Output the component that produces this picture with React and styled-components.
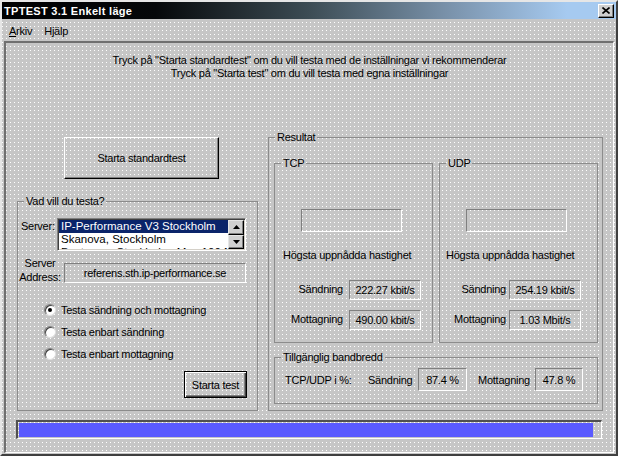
import React from "react";
import styled, { createGlobalStyle } from "styled-components";

const GlobalStyle = createGlobalStyle`
  html, body {
    margin: 0;
    padding: 0;
    background: #c6c6c6;
  }
  body {
    font-family: "Liberation Sans", Arial, sans-serif;
    font-size: 11px;
    color: #000;
  }
  * {
    box-sizing: border-box;
  }
`;

const dots = `
  background-color: #c6c6c6;
  background-image: conic-gradient(at 1px 1px, transparent 75%, #ffffff 0);
  background-size: 4px 4px;
`;

const App = () => {
  return (
    <>
      <GlobalStyle />
      <Window>
        <TitleBar>
          <TitleText>TPTEST 3.1 Enkelt läge</TitleText>
          <CloseButton>
            <svg width="8" height="7" viewBox="0 0 8 7">
              <path d="M0.5 0.5 L7.5 6.5 M7.5 0.5 L0.5 6.5" stroke="#000" strokeWidth="1.6" />
            </svg>
          </CloseButton>
        </TitleBar>
        <MenuBar>
          <MenuItem><u>A</u>rkiv</MenuItem>
          <MenuItem>H<u>j</u>älp</MenuItem>
        </MenuBar>
        <Body>
          <Intro>
            <div>Tryck på "Starta standardtest" om du vill testa med de inställningar vi rekommenderar</div>
            <div>Tryck på "Starta test" om du vill testa med egna inställningar</div>
          </Intro>
          <Main>
            <LeftColumn>
              <BigButton>Starta standardtest</BigButton>
              <Group $width={241} $height={216} $top={16}>
                <Legend>Vad vill du testa?</Legend>
                <GroupBody>
                  <ServerRow>
                    <ServerLabel>Server:</ServerLabel>
                    <ListBox>
                      <Items>
                        <Item $selected>IP-Performance V3 Stockholm</Item>
                        <Item>Skanova, Stockholm</Item>
                        <Item>Bostream, Stockholm, Max 100 Mbit</Item>
                      </Items>
                      <ScrollBar>
                        <ScrollButton>
                          <svg width="7" height="4" viewBox="0 0 7 4">
                            <polygon points="0,4 3.5,0 7,4" fill="#000" />
                          </svg>
                        </ScrollButton>
                        <ScrollButton>
                          <svg width="7" height="4" viewBox="0 0 7 4">
                            <polygon points="0,0 7,0 3.5,4" fill="#000" />
                          </svg>
                        </ScrollButton>
                      </ScrollBar>
                    </ListBox>
                  </ServerRow>
                  <AddressRow>
                    <AddressLabel>Server<br />Address:</AddressLabel>
                    <AddressBox>referens.sth.ip-performance.se</AddressBox>
                  </AddressRow>
                  <RadioList>
                    <RadioRow>
                      <RadioCircle $checked />
                      Testa sändning och mottagning
                    </RadioRow>
                    <RadioRow>
                      <RadioCircle />
                      Testa enbart sändning
                    </RadioRow>
                    <RadioRow>
                      <RadioCircle />
                      Testa enbart mottagning
                    </RadioRow>
                  </RadioList>
                  <DefaultButton>Starta test</DefaultButton>
                </GroupBody>
              </Group>
            </LeftColumn>

            <Group $width={335} $height={280} $top={0}>
              <Legend>Resultat</Legend>
              <ResultBody>
                <ProtocolRow>
                  <Group $width={159} $height={186} $top={0}>
                    <Legend>TCP</Legend>
                    <GroupBody>
                      <EmptyBox />
                      <Caption $indent={8}>Högsta uppnådda hastighet</Caption>
                      <ValueRow $labelWidth={68} $gap={6} $top={18}>
                        <RowLabel>Sändning</RowLabel>
                        <ValueBox $width={72} $height={20}>222.27 kbit/s</ValueBox>
                      </ValueRow>
                      <ValueRow $labelWidth={68} $gap={6} $top={10}>
                        <RowLabel>Mottagning</RowLabel>
                        <ValueBox $width={72} $height={20}>490.00 kbit/s</ValueBox>
                      </ValueRow>
                    </GroupBody>
                  </Group>
                  <Group $width={159} $height={186} $top={0}>
                    <Legend>UDP</Legend>
                    <GroupBody>
                      <EmptyBox />
                      <Caption $indent={6}>Högsta uppnådda hastighet</Caption>
                      <ValueRow $labelWidth={66} $gap={3} $top={18}>
                        <RowLabel>Sändning</RowLabel>
                        <ValueBox $width={72} $height={20}>254.19 kbit/s</ValueBox>
                      </ValueRow>
                      <ValueRow $labelWidth={66} $gap={3} $top={10}>
                        <RowLabel>Mottagning</RowLabel>
                        <ValueBox $width={72} $height={20}>1.03 Mbit/s</ValueBox>
                      </ValueRow>
                    </GroupBody>
                  </Group>
                </ProtocolRow>
                <Group $width={324} $height={53} $top={8}>
                  <Legend>Tillgänglig bandbredd</Legend>
                  <BandwidthRow>
                    <InlineLabel $width={83}>TCP/UDP i %:</InlineLabel>
                    <InlineLabel $width={50}>Sändning</InlineLabel>
                    <ValueBox $width={49} $height={23}>87.4 %</ValueBox>
                    <InlineLabel $width={57} $left={11}>Mottagning</InlineLabel>
                    <ValueBox $width={48} $height={23}>47.8 %</ValueBox>
                  </BandwidthRow>
                </Group>
              </ResultBody>
            </Group>
          </Main>
          <Progress>
            <ProgressFill style={{ width: "98.8%" }} />
          </Progress>
        </Body>
      </Window>
    </>
  );
};

export default App;

const Window = styled.div`
  width: 618px;
  height: 456px;
  ${dots}
  border: 2px solid;
  border-color: #e6e6e6 #404040 #404040 #e6e6e6;
  display: flex;
  flex-direction: column;
  letter-spacing: -0.25px;
`;

const TitleBar = styled.div`
  height: 17px;
  display: flex;
  align-items: center;
  justify-content: space-between;
  padding: 0 2px;
  background: linear-gradient(
    90deg,
    #000000 0%,
    #06080a 25%,
    #3c4c54 50%,
    #7890a8 72%,
    #a6caf0 92%,
    #a6caf0 100%
  );
`;

const TitleText = styled.span`
  color: #fff;
  font-weight: bold;
  font-size: 11px;
  letter-spacing: 0.3px;
`;

const CloseButton = styled.div`
  width: 16px;
  height: 14px;
  background: #d0d0d0;
  border: 1px solid;
  border-color: #fff #000 #000 #fff;
  box-shadow: inset -1px -1px #808080;
  display: flex;
  align-items: center;
  justify-content: center;
`;

const MenuBar = styled.div`
  height: 22px;
  display: flex;
  align-items: center;
  gap: 12px;
  padding: 2px 0 0 7px;
`;

const MenuItem = styled.span`
  font-size: 11px;
`;

const Body = styled.div`
  flex: 1;
  margin: 0 2px 1px 2px;
  border-style: solid;
  border-width: 2px 1px 1px 2px;
  border-color: #707070 #fff #fff #707070;
  display: flex;
  flex-direction: column;
  padding-top: 11px;
`;

const Intro = styled.div`
  text-align: center;
  line-height: 13px;
`;

const Main = styled.div`
  display: flex;
  gap: 10px;
  margin-top: 51px;
  padding-left: 11px;
`;

const LeftColumn = styled.div`
  display: flex;
  flex-direction: column;
  width: 241px;
`;

const BigButton = styled.div`
  width: 155px;
  height: 42px;
  margin: 6px 0 0 47px;
  border: 1px solid;
  border-color: #fff #000 #000 #fff;
  box-shadow: inset -1px -1px #808080;
  display: flex;
  align-items: center;
  justify-content: center;
`;

const Group = styled.fieldset`
  width: ${({ $width }) => $width}px;
  height: ${({ $height }) => $height}px;
  margin: ${({ $top }) => $top}px 0 0 0;
  padding: 0;
  min-inline-size: 0;
  border: 1px solid #8c8c8c;
  display: flex;
  flex-direction: column;
`;

const Legend = styled.legend`
  margin-left: 6px;
  padding: 0 2px;
  line-height: 13px;
`;

const GroupBody = styled.div`
  display: flex;
  flex-direction: column;
`;

const ServerRow = styled.div`
  display: flex;
  align-items: flex-start;
  margin-top: 10px;
  padding-left: 3px;
`;

const ServerLabel = styled.span`
  width: 36px;
  line-height: 13px;
  margin-top: 2px;
`;

const ListBox = styled.div`
  width: 189px;
  height: 33px;
  display: flex;
  background: #fff;
  border: 1px solid;
  border-color: #808080 #fff #fff #808080;
  box-shadow: inset 1px 1px #404040, inset -1px -1px #d4d0c8;
  padding: 1px;
  overflow: hidden;
`;

const Items = styled.div`
  flex: 1;
  overflow: hidden;
  letter-spacing: 0;
`;

const Item = styled.div`
  height: 13px;
  line-height: 13px;
  padding-left: 2px;
  white-space: nowrap;
  overflow: hidden;
  font-size: 11.5px;
  background: ${({ $selected }) => ($selected ? "#0a246a" : "transparent")};
  color: ${({ $selected }) => ($selected ? "#fff" : "#000")};
`;

const ScrollBar = styled.div`
  width: 16px;
  display: flex;
  flex-direction: column;
`;

const ScrollButton = styled.div`
  flex: 1;
  background: #d0d0d0;
  border: 1px solid;
  border-color: #e6e6e6 #000 #000 #e6e6e6;
  box-shadow: inset -1px -1px #808080;
  display: flex;
  align-items: center;
  justify-content: center;
`;

const AddressRow = styled.div`
  display: flex;
  align-items: flex-start;
  margin-top: 5px;
  padding-left: 1px;
`;

const AddressLabel = styled.div`
  width: 42px;
  text-align: center;
  line-height: 14px;
`;

const AddressBox = styled.div`
  width: 182px;
  height: 20px;
  margin: 7px 0 0 3px;
  border: 1px solid;
  border-color: #808080 #fff #fff #808080;
  display: flex;
  align-items: center;
  justify-content: center;
`;

const RadioList = styled.div`
  display: flex;
  flex-direction: column;
  margin-top: 15px;
  padding-left: 26px;
`;

const RadioRow = styled.div`
  height: 22px;
  display: flex;
  align-items: center;
  gap: 5px;
`;

const RadioCircle = styled.span`
  width: 12px;
  height: 12px;
  border-radius: 50%;
  background: #fff;
  border: 1px solid;
  border-color: #808080 #e0e0e0 #e0e0e0 #808080;
  box-shadow: inset 1px 1px #404040;
  display: flex;
  align-items: center;
  justify-content: center;

  &::after {
    content: "";
    width: 4px;
    height: 4px;
    border-radius: 50%;
    background: ${({ $checked }) => ($checked ? "#000" : "transparent")};
  }
`;

const DefaultButton = styled.div`
  align-self: flex-end;
  width: 63px;
  height: 27px;
  margin: 6px 10px 0 0;
  border: 1px solid #000;
  box-shadow: inset 1px 1px #fff, inset -1px -1px #404040, inset -2px -2px #808080;
  display: flex;
  align-items: center;
  justify-content: center;
`;

const ResultBody = styled.div`
  display: flex;
  flex-direction: column;
  padding: 13px 0 0 5px;
`;

const ProtocolRow = styled.div`
  display: flex;
  gap: 6px;
`;

const EmptyBox = styled.div`
  width: 101px;
  height: 23px;
  margin: 39px 0 0 26px;
  border: 1px solid;
  border-color: #808080 #fff #fff #808080;
`;

const Caption = styled.div`
  margin: 17px 0 0 ${({ $indent }) => $indent}px;
  line-height: 13px;
`;

const ValueRow = styled.div`
  display: grid;
  grid-template-columns: ${({ $labelWidth }) => $labelWidth}px auto;
  column-gap: ${({ $gap }) => $gap}px;
  align-items: center;
  margin-top: ${({ $top }) => $top}px;
`;

const RowLabel = styled.span`
  text-align: right;
  margin-top: -2px;
`;

const ValueBox = styled.div`
  width: ${({ $width }) => $width}px;
  height: ${({ $height }) => $height}px;
  border: 1px solid;
  border-color: #808080 #fff #fff #808080;
  display: flex;
  align-items: center;
  justify-content: center;
  white-space: nowrap;
`;

const BandwidthRow = styled.div`
  display: flex;
  align-items: center;
  margin-top: 4px;
  padding-left: 10px;
`;

const InlineLabel = styled.span`
  width: ${({ $width }) => $width}px;
  margin-left: ${({ $left = 0 }) => $left}px;
  white-space: nowrap;
`;

const Progress = styled.div`
  width: 586px;
  height: 19px;
  margin: 9px 0 0 10px;
  border-style: solid;
  border-width: 2px 1px 1px 2px;
  border-color: #505050 #fff #fff #505050;
  padding: 1px;
`;

const ProgressFill = styled.div`
  height: 100%;
  background: #5a5aff;
`;
